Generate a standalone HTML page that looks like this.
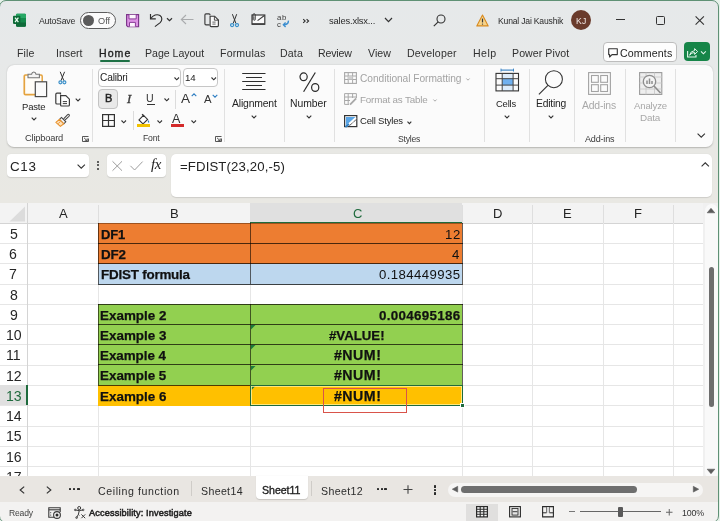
<!DOCTYPE html>
<html><head><meta charset="utf-8"><style>
html,body{margin:0;padding:0;}
body{width:720px;height:521px;overflow:hidden;position:relative;background:#e8e9e9;font-family:"Liberation Sans",sans-serif;}
.t{position:absolute;white-space:nowrap;line-height:1.117;will-change:transform;}
.r{position:absolute;box-sizing:border-box;}
svg.r{overflow:visible;}
</style></head><body>
<div class="r" style="left:0px;top:0px;width:720px;height:203px;background:linear-gradient(180deg,#e6e9ea 0px,#e7e9e9 60px,#e8e8e4 150px,#e9e8e3 203px);"></div>
<svg class="r" style="left:12px;top:13px;" width="15" height="14" viewBox="0 0 15 14"><rect x="4" y="0.8" width="10" height="12.9" rx="1.1" fill="#148a4c"/>
<path d="M4 5 V1.9 Q4 0.8 5.1 0.8 H12.9 Q14 0.8 14 1.9 V5 Z" fill="#27a865"/>
<path d="M4 9.4 H14 V12.6 Q14 13.7 12.9 13.7 H5.1 Q4 13.7 4 12.6 Z" fill="#0f6b3a"/>
<rect x="1" y="2.8" width="7.4" height="8.1" rx="0.8" fill="#0d6a37"/>
<path d="M3 4.6 L6.4 9.1 M6.4 4.6 L3 9.1" stroke="#e8fff0" stroke-width="1.25"/></svg>
<div class="t" style="left:38.98px;top:16px;line-height:10px;font-size:8.7px;font-weight:400;color:#2b2b2b;letter-spacing:-0.189px;">AutoSave</div>
<div class="r" style="left:80px;top:12px;width:36px;height:16.5px;border:1.3px solid #5c5c5c;border-radius:9px;background:#fbfbfb;"></div>
<div class="r" style="left:83px;top:15.1px;width:11px;height:11px;border-radius:50%;background:#5b5b5b;"></div>
<div class="t" style="left:98.31px;top:16px;line-height:10px;font-size:9.2px;font-weight:400;color:#555;letter-spacing:0.002px;">Off</div>
<svg class="r" style="left:126px;top:13.6px;" width="13.4" height="13.6" viewBox="0 0 13.4 13.6"><path d="M0.6 0.6 H12.6 V12.8 H1.9 L0.6 11.5 Z" fill="#dc92e4" stroke="#7b3589" stroke-width="1.15"/>
<path d="M3 0.8 V4.9 H10.2 V0.8" fill="#fdf6fd" stroke="#8a3d98" stroke-width="1"/>
<path d="M3.5 12.6 V8.4 H9.4 V12.6" fill="#fdf6fd" stroke="#8a3d98" stroke-width="1"/></svg>
<svg class="r" style="left:149px;top:13px;" width="14" height="14" viewBox="0 0 14 14"><path d="M1.5 1 V5.8 H6.8" fill="none" stroke="#2e2e2e" stroke-width="1.15"/>
<path d="M1.8 5.5 C4 2.2 8 0.6 11 2.6 C13.6 4.4 13.2 7.6 11.2 9.6 L5.9 13.6" fill="none" stroke="#2e2e2e" stroke-width="1.15"/></svg>
<svg class="r" style="left:166px;top:17px;" width="7" height="5" viewBox="0 0 7 5"><path d="M1 1.2 L3.5 3.6 L6 1.2" fill="none" stroke="#333" stroke-width="1.2"/></svg>
<svg class="r" style="left:180px;top:14px;" width="14" height="11" viewBox="0 0 14 11"><path d="M13.5 5.5 H1.5 M6 1 L1.3 5.5 L6 10" fill="none" stroke="#a9abad" stroke-width="1.1"/></svg>
<svg class="r" style="left:203.5px;top:13px;" width="16" height="15" viewBox="0 0 16 15"><path d="M6 2.3 V1.8 Q6 0.8 5 0.8 H2 Q0.9 0.8 0.9 1.9 V10.8 Q0.9 11.8 2 11.8 H5.6" fill="none" stroke="#3b3b3b" stroke-width="1.15"/>
<path d="M6.1 3.2 H10.6 L14.4 7 V12.6 Q14.4 13.6 13.4 13.6 H7.1 Q6.1 13.6 6.1 12.6 Z" fill="#fafafa" stroke="#3b3b3b" stroke-width="1.15"/>
<path d="M10.4 3.4 V7.2 H14.2" fill="none" stroke="#3b3b3b" stroke-width="0.9"/>
<path d="M8.4 9.1 H11.6 M8.4 11.1 H11.6" stroke="#555" stroke-width="0.9"/></svg>
<svg class="r" style="left:229px;top:13px;" width="11" height="15" viewBox="0 0 11 15"><path d="M3.4 1.2 L6.9 10.4 M7.7 1.2 L4.2 10.4" stroke="#333" stroke-width="1"/>
<circle cx="3.1" cy="12.1" r="1.55" fill="#e8f3fa" stroke="#3a8fc8" stroke-width="1.2"/>
<circle cx="8" cy="12.1" r="1.55" fill="#e8f3fa" stroke="#3a8fc8" stroke-width="1.2"/></svg>
<svg class="r" style="left:251px;top:13px;" width="15" height="13" viewBox="0 0 15 13"><rect x="1" y="2" width="12.8" height="9.2" fill="#fafafa" stroke="#3b3b3b" stroke-width="1.2"/>
<path d="M1 11 H13.8" stroke="#3b3b3b" stroke-width="1.5"/>
<path d="M6.6 7.6 L13.4 2.5" stroke="#3b3b3b" stroke-width="1.1"/>
<path d="M1.9 7.4 V2 Q1.9 0.7 3.1 0.7 Q4.3 0.7 4.3 2 V6.4 Q4.3 7.3 3.5 7.3 Q2.9 7.3 2.9 6.4 V3.4" fill="none" stroke="#3b3b3b" stroke-width="0.9"/></svg>
<div class="t" style="left:276.8px;top:13.9px;font-size:7.8px;line-height:7px;color:#3a3a3a;letter-spacing:0.6px">ab<br>c</div>
<svg class="r" style="left:281px;top:20px;" width="9" height="8" viewBox="0 0 9 8"><path d="M7.4 0.6 Q7.6 4.7 2.6 4.7" fill="none" stroke="#3b8ed0" stroke-width="1.5"/><path d="M4.6 2.5 L2.4 4.7 L4.6 6.9" fill="none" stroke="#3b8ed0" stroke-width="1.4"/></svg>
<svg class="r" style="left:302px;top:18px;" width="8" height="6" viewBox="0 0 8 6"><path d="M1.2 1.2 L3.2 3 L1.2 4.8 M4.6 1.2 L6.6 3 L4.6 4.8" fill="none" stroke="#2a2a2a" stroke-width="1.05"/></svg>
<div class="t" style="left:329.49px;top:15px;line-height:11px;font-size:9.4px;font-weight:400;color:#2b2b2b;letter-spacing:-0.184px;">sales.xlsx...</div>
<svg class="r" style="left:384px;top:17px;" width="9" height="6" viewBox="0 0 9 6"><path d="M1 1 L4.5 4.6 L8 1" fill="none" stroke="#333" stroke-width="1.2"/></svg>
<svg class="r" style="left:433px;top:14px;" width="13" height="13" viewBox="0 0 13 13"><circle cx="8" cy="5" r="4" fill="none" stroke="#333" stroke-width="1.1"/><path d="M5.2 7.8 L0.8 12.2" stroke="#333" stroke-width="1.2"/></svg>
<svg class="r" style="left:475.5px;top:13.5px;" width="13" height="13" viewBox="0 0 13 13"><path d="M6.5 1 L12.2 11.9 H0.8 Z" fill="#f6d38a" stroke="#d88a1f" stroke-width="1.1" stroke-linejoin="round"/><path d="M6.5 4.6 V8.4" stroke="#3a3a3a" stroke-width="1.2"/><circle cx="6.5" cy="10.1" r="0.7" fill="#3a3a3a"/></svg>
<div class="t" style="left:497.69px;top:16px;line-height:10px;font-size:8.6px;font-weight:400;color:#2b2b2b;letter-spacing:-0.192px;">Kunal Jai Kaushik</div>
<div class="r" style="left:571px;top:10px;width:20px;height:20px;border-radius:50%;background:#6a3b2c;"></div>
<div class="t" style="left:575.79px;top:16px;line-height:10px;font-size:8.6px;font-weight:400;color:#f3e9e6;letter-spacing:0.308px;">KJ</div>
<div class="r" style="left:616px;top:19.3px;width:9px;height:1.2px;background:#333;"></div>
<div class="r" style="left:656px;top:16px;width:8.5px;height:8.5px;border:1.2px solid #333;border-radius:1.5px;"></div>
<svg class="r" style="left:695px;top:16px;" width="9.5" height="9" viewBox="0 0 9.5 9"><path d="M0.6 0.4 L8.9 8.6 M8.9 0.4 L0.6 8.6" stroke="#333" stroke-width="1.1"/></svg>
<div class="t" style="left:17.13px;top:47px;line-height:12px;font-size:10.6px;font-weight:400;color:#303030;letter-spacing:0.087px;">File</div>
<div class="t" style="left:55.52px;top:47px;line-height:12px;font-size:10.6px;font-weight:400;color:#303030;letter-spacing:0.009px;">Insert</div>
<div class="t" style="left:144.63px;top:47px;line-height:12px;font-size:10.6px;font-weight:400;color:#303030;letter-spacing:-0.033px;">Page Layout</div>
<div class="t" style="left:220.13px;top:47px;line-height:12px;font-size:10.6px;font-weight:400;color:#303030;letter-spacing:0.154px;">Formulas</div>
<div class="t" style="left:280.13px;top:47px;line-height:12px;font-size:10.6px;font-weight:400;color:#303030;letter-spacing:0.160px;">Data</div>
<div class="t" style="left:318.13px;top:47px;line-height:12px;font-size:10.6px;font-weight:400;color:#303030;letter-spacing:-0.182px;">Review</div>
<div class="t" style="left:367.95px;top:47px;line-height:12px;font-size:10.6px;font-weight:400;color:#303030;letter-spacing:0.015px;">View</div>
<div class="t" style="left:406.63px;top:47px;line-height:12px;font-size:10.6px;font-weight:400;color:#303030;letter-spacing:0.154px;">Developer</div>
<div class="t" style="left:472.88px;top:47px;line-height:12px;font-size:10.6px;font-weight:400;color:#303030;letter-spacing:0.421px;">Help</div>
<div class="t" style="left:511.63px;top:47px;line-height:12px;font-size:10.6px;font-weight:400;color:#303030;letter-spacing:0.064px;">Power Pivot</div>
<div class="t" style="left:98.63px;top:47px;line-height:12px;font-size:10.6px;font-weight:400;color:#1f1f1f;letter-spacing:1.022px;-webkit-text-stroke:0.35px #1f1f1f;">Home</div>
<div class="r" style="left:99.5px;top:60.3px;width:30.5px;height:2.2px;background:#1e7145;border-radius:1px;"></div>
<div class="r" style="left:603.2px;top:42px;width:73.5px;height:20px;border:1px solid #bdbdbd;border-radius:4px;background:#fdfdfd;"></div>
<svg class="r" style="left:608px;top:47.8px;" width="10" height="10" viewBox="0 0 10 10"><path d="M0.7 0.7 H9.3 V6.6 H4 L1.6 9 V6.6 H0.7 Z" fill="none" stroke="#333" stroke-width="1.1" stroke-linejoin="round"/></svg>
<div class="t" style="left:620.16px;top:47px;line-height:12px;font-size:10.6px;font-weight:400;color:#242424;letter-spacing:0.139px;">Comments</div>
<div class="r" style="left:684px;top:42.3px;width:25.6px;height:19.2px;background:#168548;border-radius:4px;"></div>
<svg class="r" style="left:686px;top:46.5px;" width="22" height="12" viewBox="0 0 22 12"><path d="M1.6 4 V10 H10 V8" fill="none" stroke="#e3f6ea" stroke-width="1.1"/>
<path d="M3.6 8.2 Q4.4 4 8.6 3.6 V1.6 L11.6 4.5 L8.6 7.4 V5.5 Q5.6 5.4 3.6 8.2 Z" fill="none" stroke="#e3f6ea" stroke-width="1" stroke-linejoin="round"/>
<path d="M15 4.4 L17.4 6.8 L19.8 4.4" fill="none" stroke="#e3f6ea" stroke-width="1.1"/></svg>
<div class="r" style="left:7px;top:65px;width:706px;height:81.5px;background:#fbfbfb;border-radius:7px;box-shadow:0 0.6px 1.5px rgba(0,0,0,0.22);"></div>
<div class="r" style="left:91.5px;top:69px;width:1px;height:72.5px;background:#e1e1e1;"></div>
<div class="r" style="left:224.3px;top:69px;width:1px;height:72.5px;background:#e1e1e1;"></div>
<div class="r" style="left:283.5px;top:69px;width:1px;height:72.5px;background:#e1e1e1;"></div>
<div class="r" style="left:333.9px;top:69px;width:1px;height:72.5px;background:#e1e1e1;"></div>
<div class="r" style="left:484.2px;top:69px;width:1px;height:72.5px;background:#e1e1e1;"></div>
<div class="r" style="left:529px;top:69px;width:1px;height:72.5px;background:#e1e1e1;"></div>
<div class="r" style="left:573.5px;top:69px;width:1px;height:72.5px;background:#e1e1e1;"></div>
<div class="r" style="left:625.2px;top:69px;width:1px;height:72.5px;background:#e1e1e1;"></div>
<div class="r" style="left:675.2px;top:69px;width:1px;height:72.5px;background:#e1e1e1;"></div>
<div class="t" style="left:24.83px;top:133px;line-height:10px;font-size:9.3px;font-weight:400;color:#3a3a3a;letter-spacing:-0.192px;">Clipboard</div>
<div class="t" style="left:142.99px;top:133px;line-height:10px;font-size:8.6px;font-weight:400;color:#3a3a3a;letter-spacing:-0.180px;">Font</div>
<div class="t" style="left:397.61px;top:134px;line-height:10px;font-size:8.6px;font-weight:400;color:#3a3a3a;letter-spacing:-0.224px;">Styles</div>
<div class="t" style="left:584.58px;top:134px;line-height:10px;font-size:9.0px;font-weight:400;color:#3a3a3a;letter-spacing:-0.170px;">Add-ins</div>
<svg class="r" style="left:82px;top:136px;" width="7" height="6" viewBox="0 0 7 6"><path d="M0.5 5.5 V0.5 H6.5 M0.5 5.5 H6.5 V2.5 M2 1.8 L5.2 4.8 M5.2 2.4 V4.8 H2.8" fill="none" stroke="#444" stroke-width="0.9"/></svg>
<svg class="r" style="left:215.2px;top:136px;" width="7" height="6" viewBox="0 0 7 6"><path d="M0.5 5.5 V0.5 H6.5 M0.5 5.5 H6.5 V2.5 M2 1.8 L5.2 4.8 M5.2 2.4 V4.8 H2.8" fill="none" stroke="#444" stroke-width="0.9"/></svg>
<svg class="r" style="left:22px;top:71px;" width="27" height="27" viewBox="0 0 27 27"><path d="M5.8 4 H3.5 Q2.3 4 2.3 5.2 V22.5 Q2.3 23.7 3.5 23.7 H13.3 V10.8 H20.2 V5.2 Q20.2 4 19 4 H17.6 Z" fill="#fffdf8" stroke="none"/>
<path d="M5.8 4 H3.5 Q2.3 4 2.3 5.2 V22.5 Q2.3 23.7 3.5 23.7 H13.3" fill="none" stroke="#e5a33e" stroke-width="1.7"/>
<path d="M17.6 4 H19 Q20.2 4 20.2 5.2 V10.8" fill="none" stroke="#e5a33e" stroke-width="1.5"/>
<path d="M6 6.8 V3.2 H9.6 Q10 1 11.8 1 Q13.6 1 14 3.2 H17.4 V6.8 Z" fill="#f4f4f4" stroke="#767676" stroke-width="1.1"/>
<rect x="13.3" y="10.8" width="11.3" height="14.8" fill="#fafafa" stroke="#4a4a4a" stroke-width="1.2"/></svg>
<div class="t" style="left:21.72px;top:101px;line-height:11px;font-size:9.5px;font-weight:400;color:#242424;letter-spacing:-0.198px;">Paste</div>
<svg class="r" style="left:30.5px;top:116.5px;" width="6" height="4" viewBox="0 0 6 4"><path d="M0.7 0.7 L3 3 L5.3 0.7" fill="none" stroke="#333" stroke-width="1.1"/></svg>
<svg class="r" style="left:57px;top:71px;" width="11" height="14" viewBox="0 0 11 14"><path d="M3.2 0.8 L6.8 9.6 M7.6 0.8 L4 9.6" stroke="#333" stroke-width="1"/>
<circle cx="3.4" cy="11.3" r="1.5" fill="#e8f3fa" stroke="#3a8fc8" stroke-width="1.15"/>
<circle cx="7.4" cy="11.3" r="1.5" fill="#e8f3fa" stroke="#3a8fc8" stroke-width="1.15"/></svg>
<svg class="r" style="left:54.5px;top:92px;" width="16" height="15" viewBox="0 0 16 15"><path d="M5.5 2.5 V1.2 H2 Q0.8 1.2 0.8 2.4 V11 Q0.8 12 2 12 H5" fill="none" stroke="#3b3b3b" stroke-width="1.2"/>
<path d="M5.6 3.6 H10.8 L14.4 7.2 V13 Q14.4 14 13.4 14 H6.6 Q5.6 14 5.6 13 Z" fill="#fff" stroke="#3b3b3b" stroke-width="1.2"/>
<path d="M7.8 9.6 H12 M7.8 11.6 H12" stroke="#3b3b3b" stroke-width="1"/></svg>
<svg class="r" style="left:75px;top:97.5px;" width="6" height="4" viewBox="0 0 6 4"><path d="M0.7 0.7 L3 3 L5.3 0.7" fill="none" stroke="#333" stroke-width="1.1"/></svg>
<svg class="r" style="left:55px;top:113px;" width="15" height="14" viewBox="0 0 15 14"><path d="M8.6 5.8 L12.4 1.8 Q13.4 0.9 14.1 1.6 Q14.8 2.4 13.9 3.3 L9.9 7.1" fill="#fff" stroke="#444" stroke-width="1.05"/>
<path d="M6.4 4.4 L10.8 8.8 L8.8 10.8 L4.4 6.4 Z" fill="#fff" stroke="#444" stroke-width="1.05"/>
<path d="M4.4 6.4 L0.9 9.3 L5.4 13.4 L8.8 10.8 Z" fill="#fde1bd" stroke="#e8922c" stroke-width="1.1" stroke-linejoin="round"/>
<path d="M3.2 10.6 L5.6 8.4" stroke="#e8922c" stroke-width="0.9"/></svg>
<div class="r" style="left:98.2px;top:68.4px;width:83px;height:19px;border:1px solid #c6c6c6;border-radius:4px;background:#fff;"></div>
<div class="t" style="left:99.68px;top:72px;line-height:11px;font-size:10.2px;font-weight:400;color:#242424;letter-spacing:-0.184px;">Calibri</div>
<svg class="r" style="left:174.2px;top:76.5px;" width="5.5" height="3.5" viewBox="0 0 5.5 3.5"><path d="M0.5 0.5 L2.75 2.8 L5 0.5" fill="none" stroke="#333" stroke-width="1.1"/></svg>
<div class="r" style="left:183.2px;top:68.4px;width:34.4px;height:19px;border:1px solid #c6c6c6;border-radius:4px;background:#fff;"></div>
<div class="t" style="left:184.96px;top:72px;line-height:11px;font-size:9.7px;font-weight:400;color:#242424;letter-spacing:-0.166px;">14</div>
<svg class="r" style="left:211px;top:76.5px;" width="5.5" height="3.5" viewBox="0 0 5.5 3.5"><path d="M0.5 0.5 L2.75 2.8 L5 0.5" fill="none" stroke="#333" stroke-width="1.1"/></svg>
<div class="r" style="left:98.4px;top:89.4px;width:19.5px;height:19.2px;border:1px solid #c3c3c3;border-radius:4px;background:#e9e9e9;"></div>
<div class="t" style="left:104.60px;top:92px;line-height:12px;font-size:11px;font-weight:400;color:#222;letter-spacing:0.000px;-webkit-text-stroke:0.45px #222;">B</div>
<div class="t" style="left:126.94px;top:92px;line-height:14px;font-size:12.6px;font-weight:400;color:#3a3a3a;letter-spacing:0.000px;font-family:'Liberation Serif',serif;font-style:italic;-webkit-text-stroke:0.35px #3a3a3a;">I</div>
<div class="t" style="left:146.38px;top:92px;line-height:12px;font-size:10.6px;font-weight:400;color:#333;letter-spacing:0.000px;">U</div>
<div class="r" style="left:147px;top:104.2px;width:7.6px;height:1px;background:#333;"></div>
<svg class="r" style="left:164.2px;top:98.3px;" width="5.5" height="3.5" viewBox="0 0 5.5 3.5"><path d="M0.5 0.5 L2.75 2.8 L5 0.5" fill="none" stroke="#333" stroke-width="1.1"/></svg>
<div class="r" style="left:175.3px;top:90px;width:1px;height:18.5px;background:#dcdcdc;"></div>
<div class="t" style="left:180.97px;top:91px;line-height:15px;font-size:13.6px;font-weight:400;color:#333;letter-spacing:0.000px;">A</div>
<svg class="r" style="left:190.5px;top:92.5px;" width="6" height="4" viewBox="0 0 6 4"><path d="M0.7 3.2 L3 0.9 L5.3 3.2" fill="none" stroke="#2f7ec2" stroke-width="1.1"/></svg>
<div class="t" style="left:203.68px;top:93px;line-height:12px;font-size:11.3px;font-weight:400;color:#333;letter-spacing:0.000px;">A</div>
<svg class="r" style="left:211.8px;top:93.5px;" width="6" height="4" viewBox="0 0 6 4"><path d="M0.7 0.8 L3 3.1 L5.3 0.8" fill="none" stroke="#2f7ec2" stroke-width="1.1"/></svg>
<svg class="r" style="left:101.5px;top:114px;" width="13" height="13" viewBox="0 0 13 13"><rect x="0.6" y="0.6" width="11.8" height="11.8" fill="none" stroke="#333" stroke-width="1.2"/><path d="M6.5 0.6 V12.4 M0.6 6.5 H12.4" stroke="#333" stroke-width="1.2"/></svg>
<svg class="r" style="left:121.2px;top:119.5px;" width="5.5" height="3.5" viewBox="0 0 5.5 3.5"><path d="M0.5 0.5 L2.75 2.8 L5 0.5" fill="none" stroke="#333" stroke-width="1.1"/></svg>
<div class="r" style="left:132.6px;top:111px;width:1px;height:19.4px;background:#dcdcdc;"></div>
<svg class="r" style="left:137px;top:113px;" width="14" height="14" viewBox="0 0 14 14"><path d="M2 6.8 L6.5 2.3 L10.6 6.4 L6.8 10.2 Q6 11 5.2 10.2 L2 7 Z" fill="#fff" stroke="#333" stroke-width="1.1"/>
<path d="M5 1.2 L6.8 3" stroke="#333" stroke-width="1.1"/>
<path d="M11.3 7 Q12.6 8.6 12.2 9.4 Q11.6 10 11 9.2 Q10.6 8.4 11.3 7 Z" fill="#2f7ec2"/></svg>
<div class="r" style="left:137.3px;top:124.2px;width:13.2px;height:2.8px;background:#f2c200;"></div>
<svg class="r" style="left:156.7px;top:119.5px;" width="5.5" height="3.5" viewBox="0 0 5.5 3.5"><path d="M0.5 0.5 L2.75 2.8 L5 0.5" fill="none" stroke="#333" stroke-width="1.1"/></svg>
<div class="t" style="left:172.18px;top:112px;line-height:14px;font-size:12.6px;font-weight:400;color:#333;letter-spacing:0.000px;">A</div>
<div class="r" style="left:171px;top:124.2px;width:12.8px;height:2.8px;background:#d42a2a;"></div>
<svg class="r" style="left:190.5px;top:119.5px;" width="5.5" height="3.5" viewBox="0 0 5.5 3.5"><path d="M0.5 0.5 L2.75 2.8 L5 0.5" fill="none" stroke="#333" stroke-width="1.1"/></svg>
<svg class="r" style="left:242px;top:72px;" width="24" height="19" viewBox="0 0 24 19"><path d="M0.2 1.5 H23.5 M4 5.5 H20 M0.2 9.5 H23.5 M4 13.5 H20 M0.2 17.5 H23.5" stroke="#2e2e2e" stroke-width="1.15"/></svg>
<div class="t" style="left:231.58px;top:98px;line-height:11px;font-size:10.4px;font-weight:400;color:#242424;letter-spacing:-0.169px;">Alignment</div>
<svg class="r" style="left:251px;top:114.5px;" width="6" height="4" viewBox="0 0 6 4"><path d="M0.7 0.7 L3 3 L5.3 0.7" fill="none" stroke="#333" stroke-width="1.1"/></svg>
<svg class="r" style="left:297.5px;top:71.5px;" width="23" height="21" viewBox="0 0 23 21"><ellipse cx="5.6" cy="4.8" rx="3.6" ry="3.9" fill="none" stroke="#2a2a2a" stroke-width="1.2"/><ellipse cx="17.2" cy="15.5" rx="3.6" ry="3.9" fill="none" stroke="#2a2a2a" stroke-width="1.2"/><path d="M17.3 0.5 L5.6 19.8" stroke="#2a2a2a" stroke-width="1.2"/></svg>
<div class="t" style="left:290.15px;top:98px;line-height:11px;font-size:10.4px;font-weight:400;color:#242424;letter-spacing:-0.073px;">Number</div>
<svg class="r" style="left:306px;top:114.5px;" width="6" height="4" viewBox="0 0 6 4"><path d="M0.7 0.7 L3 3 L5.3 0.7" fill="none" stroke="#333" stroke-width="1.1"/></svg>
<svg class="r" style="left:344px;top:71.8px;" width="13" height="12" viewBox="0 0 13 12"><rect x="0.6" y="0.6" width="11.8" height="10.8" fill="none" stroke="#a8a8a8" stroke-width="1.1"/><path d="M0.6 4 H12.4 M0.6 7.5 H12.4 M4.2 0.6 V11.4 M8.6 0.6 V11.4" stroke="#a8a8a8" stroke-width="1"/><rect x="4.2" y="4" width="4.4" height="3.5" fill="#d0d0d0"/></svg>
<div class="t" style="left:360.28px;top:73px;line-height:11px;font-size:10.2px;font-weight:400;color:#a3a3a3;letter-spacing:-0.047px;">Conditional Formatting</div>
<svg class="r" style="left:466px;top:78px;" width="4" height="3" viewBox="0 0 4 3"><path d="M0.4 0.5 L2 2.2 L3.6 0.5" fill="none" stroke="#a3a3a3" stroke-width="0.9"/></svg>
<svg class="r" style="left:344px;top:93.2px;" width="13" height="12" viewBox="0 0 13 12"><path d="M0.6 0.6 H12.4 V5 M0.6 0.6 V11.4 H5 M0.6 4 H12.4 M0.6 7.5 H6 M4.2 0.6 V11.4 M8.6 0.6 V5" fill="none" stroke="#a8a8a8" stroke-width="1"/><path d="M6 11.6 L12.2 5.4" stroke="#a8a8a8" stroke-width="1.8"/></svg>
<div class="t" style="left:360.00px;top:94px;line-height:11px;font-size:9.8px;font-weight:400;color:#a3a3a3;letter-spacing:-0.172px;">Format as Table</div>
<svg class="r" style="left:432.7px;top:99.3px;" width="4" height="3" viewBox="0 0 4 3"><path d="M0.4 0.5 L2 2.2 L3.6 0.5" fill="none" stroke="#a3a3a3" stroke-width="0.9"/></svg>
<svg class="r" style="left:344px;top:115px;" width="13.5" height="12.5" viewBox="0 0 13.5 12.5"><rect x="0.6" y="0.6" width="12.2" height="11" fill="#fff" stroke="#333" stroke-width="1.2"/>
<path d="M1.9 1.9 H11.5 V2.6 L3.4 10.4 H1.9 Z" fill="#5aa5e6"/>
<path d="M2.4 11.2 L12 2.6" stroke="#fff" stroke-width="1.6"/>
<path d="M4.6 11.4 L12.4 4.4" stroke="#333" stroke-width="1" stroke-dasharray="1.2 0.6"/>
<path d="M1.4 12 L5 9" stroke="#2f7ec2" stroke-width="1.8"/></svg>
<div class="t" style="left:360.32px;top:115px;line-height:11px;font-size:9.5px;font-weight:400;color:#242424;letter-spacing:-0.185px;">Cell Styles</div>
<svg class="r" style="left:407px;top:120.6px;" width="5" height="3.5" viewBox="0 0 5 3.5"><path d="M0.5 0.6 L2.4 2.6 L4.3 0.6" fill="none" stroke="#333" stroke-width="1.1"/></svg>
<svg class="r" style="left:494.5px;top:67.5px;" width="25" height="24" viewBox="0 0 25 24"><path d="M6 2.1 H18.5" stroke="#2f7ec2" stroke-width="1.1"/><path d="M6 0.6 V3.6 M18.5 0.6 V3.6" stroke="#2f7ec2" stroke-width="0.9"/>
<rect x="7.2" y="5.4" width="10.9" height="17.5" fill="#dcecfb"/>
<rect x="7.2" y="10.7" width="10.9" height="6.4" fill="#6fb0ef"/>
<rect x="1" y="5.4" width="22.5" height="17.5" fill="none" stroke="#333" stroke-width="1.1"/>
<path d="M1 10.7 H23.5 M1 17.1 H23.5 M7.2 5.4 V22.9 M18.1 5.4 V22.9" stroke="#444" stroke-width="1"/></svg>
<div class="t" style="left:496.42px;top:98px;line-height:11px;font-size:9.4px;font-weight:400;color:#242424;letter-spacing:-0.169px;">Cells</div>
<svg class="r" style="left:503.6px;top:114.5px;" width="6" height="4" viewBox="0 0 6 4"><path d="M0.7 0.7 L3 3 L5.3 0.7" fill="none" stroke="#333" stroke-width="1.1"/></svg>
<svg class="r" style="left:538px;top:69.5px;" width="26" height="25" viewBox="0 0 26 25"><circle cx="15.9" cy="9.2" r="8.5" fill="none" stroke="#333" stroke-width="1.05"/><path d="M9.9 15.3 L0.9 24.3" stroke="#333" stroke-width="1.1"/></svg>
<div class="t" style="left:535.76px;top:98px;line-height:11px;font-size:10.3px;font-weight:400;color:#242424;letter-spacing:-0.214px;">Editing</div>
<svg class="r" style="left:548px;top:114.5px;" width="6" height="4" viewBox="0 0 6 4"><path d="M0.7 0.7 L3 3 L5.3 0.7" fill="none" stroke="#333" stroke-width="1.1"/></svg>
<svg class="r" style="left:588px;top:71.5px;" width="23" height="23" viewBox="0 0 23 23"><rect x="0.6" y="0.6" width="21.8" height="21.8" fill="none" stroke="#a3a3a3" stroke-width="1.1"/><rect x="3.5" y="3.5" width="6.8" height="6.8" fill="none" stroke="#a3a3a3" stroke-width="1.1"/><rect x="12.7" y="3.5" width="6.8" height="6.8" fill="none" stroke="#a3a3a3" stroke-width="1.1"/><rect x="3.5" y="12.7" width="6.8" height="6.8" fill="none" stroke="#a3a3a3" stroke-width="1.1"/><rect x="12.7" y="12.7" width="6.8" height="6.8" fill="none" stroke="#a3a3a3" stroke-width="1.1"/></svg>
<div class="t" style="left:582.48px;top:100px;line-height:11px;font-size:10.4px;font-weight:400;color:#a8a8a8;letter-spacing:-0.186px;">Add-ins</div>
<svg class="r" style="left:639px;top:71.5px;" width="24" height="23" viewBox="0 0 24 23"><rect x="0.6" y="0.6" width="22.2" height="21.8" fill="#eeeeee" stroke="#9a9a9a" stroke-width="1.1"/>
<path d="M0.6 5 H22.8 M0.6 11 H22.8 M0.6 17 H22.8 M7 0.6 V22.4 M15.5 0.6 V22.4" stroke="#c8c8c8" stroke-width="0.9"/>
<circle cx="10.5" cy="9.5" r="6.2" fill="#f4f4f4" stroke="#8d8d8d" stroke-width="1.3"/>
<path d="M15 14 L21.5 21" stroke="#8d8d8d" stroke-width="1.6"/>
<path d="M8 12 V8.5 M10.5 12 V6.5 M13 12 V9" stroke="#8d8d8d" stroke-width="1.5"/></svg>
<div class="t" style="left:634.18px;top:100px;line-height:11px;font-size:9.6px;font-weight:400;color:#a8a8a8;letter-spacing:-0.168px;">Analyze</div>
<div class="t" style="left:639.59px;top:112px;line-height:11px;font-size:9.9px;font-weight:400;color:#a8a8a8;letter-spacing:-0.167px;">Data</div>
<svg class="r" style="left:696.7px;top:133px;" width="8.5" height="5" viewBox="0 0 8.5 5"><path d="M0.6 0.6 L4.25 4.2 L7.9 0.6" fill="none" stroke="#333" stroke-width="1.1"/></svg>
<div class="r" style="left:7px;top:154.4px;width:82px;height:22.6px;background:#fff;border-radius:4px;box-shadow:0 0.5px 1px rgba(0,0,0,0.12);"></div>
<div class="t" style="left:10.12px;top:159px;line-height:15px;font-size:13.4px;font-weight:400;color:#222;letter-spacing:0.644px;">C13</div>
<svg class="r" style="left:77px;top:164px;" width="8.5" height="5" viewBox="0 0 8.5 5"><path d="M0.6 0.6 L4.25 4.2 L7.9 0.6" fill="none" stroke="#333" stroke-width="1.1"/></svg>
<div class="r" style="left:97.3px;top:160.7px;width:1.9px;height:1.9px;background:#333;border-radius:50%;"></div>
<div class="r" style="left:97.3px;top:164.4px;width:1.9px;height:1.9px;background:#333;border-radius:50%;"></div>
<div class="r" style="left:97.3px;top:168.1px;width:1.9px;height:1.9px;background:#333;border-radius:50%;"></div>
<div class="r" style="left:107px;top:154.4px;width:59px;height:22.6px;background:#fff;border-radius:4px;box-shadow:0 0.5px 1px rgba(0,0,0,0.12);"></div>
<svg class="r" style="left:112px;top:160.5px;" width="10.5" height="10" viewBox="0 0 10.5 10"><path d="M0.5 0.3 L10 9.7 M10 0.3 L0.5 9.7" stroke="#9d9d9d" stroke-width="1"/></svg>
<svg class="r" style="left:130.3px;top:160.5px;" width="13" height="9.5" viewBox="0 0 13 9.5"><path d="M0.4 4.8 L4.6 9 L12.6 0.6" fill="none" stroke="#9d9d9d" stroke-width="1"/></svg>
<div class="t" style="left:150.8px;top:156px;font-size:15px;line-height:17px;color:#222;font-family:'Liberation Serif',serif;font-style:italic;letter-spacing:-0.3px">fx</div>
<div class="r" style="left:171px;top:154.4px;width:541px;height:42.8px;background:#fff;border-radius:5px;box-shadow:0 0.5px 1px rgba(0,0,0,0.12);"></div>
<div class="t" style="left:179.86px;top:159px;line-height:15px;font-size:13.2px;font-weight:400;color:#222;letter-spacing:0.126px;">=FDIST(23,20,-5)</div>
<svg class="r" style="left:701px;top:161.5px;" width="8.5" height="5" viewBox="0 0 8.5 5"><path d="M0.6 4.4 L4.25 0.8 L7.9 4.4" fill="none" stroke="#333" stroke-width="1.1"/></svg>
<div class="r" style="left:0px;top:203px;width:703px;height:20.30000000000001px;background:#f3f3f3;"></div>
<div class="r" style="left:0px;top:223.3px;width:703px;height:253.09999999999997px;background:#fff;"></div>
<div class="r" style="left:0px;top:243.24px;width:703px;height:1px;background:#e6e6e6;"></div>
<div class="r" style="left:0px;top:263.48px;width:703px;height:1px;background:#e6e6e6;"></div>
<div class="r" style="left:0px;top:283.71999999999997px;width:703px;height:1px;background:#e6e6e6;"></div>
<div class="r" style="left:0px;top:303.96px;width:703px;height:1px;background:#e6e6e6;"></div>
<div class="r" style="left:0px;top:324.2px;width:703px;height:1px;background:#e6e6e6;"></div>
<div class="r" style="left:0px;top:344.44px;width:703px;height:1px;background:#e6e6e6;"></div>
<div class="r" style="left:0px;top:364.68px;width:703px;height:1px;background:#e6e6e6;"></div>
<div class="r" style="left:0px;top:384.92px;width:703px;height:1px;background:#e6e6e6;"></div>
<div class="r" style="left:0px;top:405.16px;width:703px;height:1px;background:#e6e6e6;"></div>
<div class="r" style="left:0px;top:426.0px;width:703px;height:1px;background:#e6e6e6;"></div>
<div class="r" style="left:0px;top:445.64px;width:703px;height:1px;background:#e6e6e6;"></div>
<div class="r" style="left:0px;top:465.88px;width:703px;height:1px;background:#e6e6e6;"></div>
<div class="r" style="left:0px;top:222.5px;width:703px;height:1.2px;background:#d4d4d4;"></div>
<div class="r" style="left:27px;top:223.3px;width:1px;height:253.09999999999997px;background:#e6e6e6;"></div>
<div class="r" style="left:27px;top:205px;width:1px;height:18.30000000000001px;background:#dedede;"></div>
<div class="r" style="left:98px;top:223.3px;width:1px;height:253.09999999999997px;background:#e6e6e6;"></div>
<div class="r" style="left:98px;top:205px;width:1px;height:18.30000000000001px;background:#dedede;"></div>
<div class="r" style="left:250px;top:223.3px;width:1px;height:253.09999999999997px;background:#e6e6e6;"></div>
<div class="r" style="left:250px;top:205px;width:1px;height:18.30000000000001px;background:#dedede;"></div>
<div class="r" style="left:462px;top:223.3px;width:1px;height:253.09999999999997px;background:#e6e6e6;"></div>
<div class="r" style="left:462px;top:205px;width:1px;height:18.30000000000001px;background:#dedede;"></div>
<div class="r" style="left:532.4px;top:223.3px;width:1px;height:253.09999999999997px;background:#e6e6e6;"></div>
<div class="r" style="left:532.4px;top:205px;width:1px;height:18.30000000000001px;background:#dedede;"></div>
<div class="r" style="left:603px;top:223.3px;width:1px;height:253.09999999999997px;background:#e6e6e6;"></div>
<div class="r" style="left:603px;top:205px;width:1px;height:18.30000000000001px;background:#dedede;"></div>
<div class="r" style="left:673px;top:223.3px;width:1px;height:253.09999999999997px;background:#e6e6e6;"></div>
<div class="r" style="left:673px;top:205px;width:1px;height:18.30000000000001px;background:#dedede;"></div>
<div class="r" style="left:27px;top:203px;width:1px;height:273.4px;background:#d4d4d4;"></div>
<div class="r" style="left:250px;top:203px;width:212px;height:20.30000000000001px;background:#e0e0e0;"></div>
<div class="r" style="left:250px;top:221.8px;width:212px;height:2px;background:#1e6b3d;"></div>
<svg class="r" style="left:9px;top:206px;" width="17" height="16" viewBox="0 0 17 16"><path d="M16 0.5 V15.5 H0.5 Z" fill="#dcdcdc"/></svg>
<div class="t" style="left:58.74px;top:206px;line-height:15px;font-size:13px;font-weight:400;color:#242424;letter-spacing:0.000px;">A</div>
<div class="t" style="left:170.20px;top:206px;line-height:15px;font-size:13px;font-weight:400;color:#242424;letter-spacing:0.000px;">B</div>
<div class="t" style="left:492.84px;top:206px;line-height:15px;font-size:13px;font-weight:400;color:#242424;letter-spacing:0.000px;">D</div>
<div class="t" style="left:563.20px;top:206px;line-height:15px;font-size:13px;font-weight:400;color:#242424;letter-spacing:0.000px;">E</div>
<div class="t" style="left:633.86px;top:206px;line-height:15px;font-size:13px;font-weight:400;color:#242424;letter-spacing:0.000px;">F</div>
<div class="t" style="left:352.75px;top:206px;line-height:15px;font-size:13px;font-weight:400;color:#1f6a3d;letter-spacing:0.000px;">C</div>
<div class="r" style="left:0px;top:385.22px;width:27px;height:20.24px;background:#e0e0e0;"></div>
<div class="r" style="left:26px;top:385.22px;width:2px;height:20.24px;background:#1e6b3d;"></div>
<div class="t" style="left:9.61px;top:226px;line-height:16px;font-size:14.1px;font-weight:400;color:#262626;letter-spacing:0.000px;">5</div>
<div class="t" style="left:9.46px;top:246px;line-height:16px;font-size:14.1px;font-weight:400;color:#262626;letter-spacing:0.000px;">6</div>
<div class="t" style="left:9.46px;top:266px;line-height:16px;font-size:14.1px;font-weight:400;color:#262626;letter-spacing:0.000px;">7</div>
<div class="t" style="left:9.57px;top:287px;line-height:16px;font-size:14.1px;font-weight:400;color:#262626;letter-spacing:0.000px;">8</div>
<div class="t" style="left:9.52px;top:307px;line-height:16px;font-size:14.1px;font-weight:400;color:#262626;letter-spacing:0.000px;">9</div>
<div class="t" style="left:5.98px;top:327px;line-height:16px;font-size:14.1px;font-weight:400;color:#262626;letter-spacing:0.000px;">10</div>
<div class="t" style="left:5.98px;top:347px;line-height:16px;font-size:14.1px;font-weight:400;color:#262626;letter-spacing:0.000px;">11</div>
<div class="t" style="left:5.98px;top:368px;line-height:16px;font-size:14.1px;font-weight:400;color:#262626;letter-spacing:0.000px;">12</div>
<div class="t" style="left:5.98px;top:388px;line-height:16px;font-size:14.1px;font-weight:400;color:#1f6a3d;letter-spacing:0.000px;">13</div>
<div class="t" style="left:5.98px;top:408px;line-height:16px;font-size:14.1px;font-weight:400;color:#262626;letter-spacing:0.000px;">14</div>
<div class="t" style="left:5.98px;top:428px;line-height:16px;font-size:14.1px;font-weight:400;color:#262626;letter-spacing:0.000px;">15</div>
<div class="t" style="left:5.98px;top:449px;line-height:16px;font-size:14.1px;font-weight:400;color:#262626;letter-spacing:0.000px;">16</div>
<div class="t" style="left:5.98px;top:469px;line-height:16px;font-size:14.1px;font-weight:400;color:#262626;letter-spacing:0.000px;">17</div>
<div class="r" style="left:98px;top:223.3px;width:364px;height:20.74px;background:#ed7d31;"></div>
<div class="r" style="left:98px;top:243.54000000000002px;width:364px;height:20.74px;background:#ed7d31;"></div>
<div class="r" style="left:98px;top:263.78000000000003px;width:364px;height:20.74px;background:#bdd7ee;"></div>
<div class="r" style="left:98px;top:304.26px;width:364px;height:20.74px;background:#92d050;"></div>
<div class="r" style="left:98px;top:324.5px;width:364px;height:20.74px;background:#92d050;"></div>
<div class="r" style="left:98px;top:344.74px;width:364px;height:20.74px;background:#92d050;"></div>
<div class="r" style="left:98px;top:364.98px;width:364px;height:20.74px;background:#92d050;"></div>
<div class="r" style="left:98px;top:385.22px;width:364px;height:20.74px;background:#ffc000;"></div>
<div class="r" style="left:98px;top:222.8px;width:365px;height:1px;background:rgba(60,30,10,0.45);"></div>
<div class="r" style="left:98px;top:243.04000000000002px;width:365px;height:1px;background:rgba(10,5,0,0.72);"></div>
<div class="r" style="left:98px;top:263.28000000000003px;width:365px;height:1px;background:rgba(10,5,0,0.72);"></div>
<div class="r" style="left:98px;top:283.52px;width:365px;height:1px;background:rgba(10,5,0,0.72);"></div>
<div class="r" style="left:97.9px;top:223.3px;width:1.3px;height:60.71999999999997px;background:rgba(10,5,0,0.6);"></div>
<div class="r" style="left:249.9px;top:223.3px;width:1.3px;height:60.71999999999997px;background:rgba(10,5,0,0.6);"></div>
<div class="r" style="left:461.9px;top:223.3px;width:1.3px;height:60.71999999999997px;background:rgba(10,5,0,0.6);"></div>
<div class="r" style="left:98px;top:303.76px;width:365px;height:1px;background:rgba(10,5,0,0.72);"></div>
<div class="r" style="left:98px;top:324.0px;width:365px;height:1px;background:rgba(10,5,0,0.72);"></div>
<div class="r" style="left:98px;top:344.24px;width:365px;height:1px;background:rgba(10,5,0,0.72);"></div>
<div class="r" style="left:98px;top:364.48px;width:365px;height:1px;background:rgba(10,5,0,0.72);"></div>
<div class="r" style="left:98px;top:384.72px;width:365px;height:1px;background:rgba(10,5,0,0.72);"></div>
<div class="r" style="left:97.9px;top:304.26px;width:1.3px;height:80.96000000000004px;background:rgba(10,5,0,0.6);"></div>
<div class="r" style="left:249.9px;top:304.26px;width:1.3px;height:101.20000000000005px;background:rgba(10,5,0,0.6);"></div>
<div class="r" style="left:461.9px;top:304.26px;width:1.3px;height:80.96000000000004px;background:rgba(10,5,0,0.6);"></div>
<div class="t" style="left:100.83px;top:227px;line-height:15px;font-size:13.0px;font-weight:700;color:#111;letter-spacing:-0.164px;-webkit-text-stroke:0.25px #111;">DF1</div>
<div class="t" style="left:100.80px;top:247px;line-height:15px;font-size:13.4px;font-weight:700;color:#111;letter-spacing:-0.191px;-webkit-text-stroke:0.25px #111;">DF2</div>
<div class="t" style="left:100.80px;top:267px;line-height:15px;font-size:13.4px;font-weight:700;color:#111;letter-spacing:-0.205px;-webkit-text-stroke:0.25px #111;">FDIST formula</div>
<div class="t" style="left:444.89px;top:227px;line-height:15px;font-size:13.2px;font-weight:400;color:#111;letter-spacing:0.687px;">12</div>
<div class="t" style="left:452.30px;top:247px;line-height:15px;font-size:13.2px;font-weight:400;color:#111;letter-spacing:0.000px;">4</div>
<div class="t" style="left:378.88px;top:267px;line-height:15px;font-size:13.2px;font-weight:400;color:#111;letter-spacing:0.419px;">0.184449935</div>
<div class="t" style="left:100.40px;top:308px;line-height:15px;font-size:13.4px;font-weight:700;color:#111;letter-spacing:0.030px;-webkit-text-stroke:0.25px #111;">Example 2</div>
<div class="t" style="left:100.40px;top:328px;line-height:15px;font-size:13.4px;font-weight:700;color:#111;letter-spacing:0.023px;-webkit-text-stroke:0.25px #111;">Example 3</div>
<div class="t" style="left:100.40px;top:348px;line-height:15px;font-size:13.4px;font-weight:700;color:#111;letter-spacing:-0.028px;-webkit-text-stroke:0.25px #111;">Example 4</div>
<div class="t" style="left:100.40px;top:368px;line-height:15px;font-size:13.4px;font-weight:700;color:#111;letter-spacing:0.009px;-webkit-text-stroke:0.25px #111;">Example 5</div>
<div class="t" style="left:100.40px;top:389px;line-height:15px;font-size:13.4px;font-weight:700;color:#111;letter-spacing:0.023px;-webkit-text-stroke:0.25px #111;">Example 6</div>
<div class="t" style="left:378.97px;top:308px;line-height:15px;font-size:13.4px;font-weight:700;color:#111;letter-spacing:0.297px;-webkit-text-stroke:0.25px #111;">0.004695186</div>
<div class="t" style="left:328.77px;top:328px;line-height:15px;font-size:13.2px;font-weight:700;color:#111;letter-spacing:0.018px;-webkit-text-stroke:0.25px #111;">#VALUE!</div>
<div class="t" style="left:334.06px;top:347px;line-height:16px;font-size:14.2px;font-weight:700;color:#111;letter-spacing:0.483px;-webkit-text-stroke:0.25px #111;">#NUM!</div>
<div class="t" style="left:334.06px;top:367px;line-height:16px;font-size:14.2px;font-weight:700;color:#111;letter-spacing:0.483px;-webkit-text-stroke:0.25px #111;">#NUM!</div>
<div class="t" style="left:334.06px;top:388px;line-height:16px;font-size:14.2px;font-weight:700;color:#111;letter-spacing:0.483px;-webkit-text-stroke:0.25px #111;">#NUM!</div>
<svg class="r" style="left:251px;top:325.1px;" width="5" height="5" viewBox="0 0 5 5"><path d="M0 0 H4.5 L0 4.5 Z" fill="#1e7a3c"/></svg>
<svg class="r" style="left:251px;top:345.34000000000003px;" width="5" height="5" viewBox="0 0 5 5"><path d="M0 0 H4.5 L0 4.5 Z" fill="#1e7a3c"/></svg>
<svg class="r" style="left:251px;top:365.58000000000004px;" width="5" height="5" viewBox="0 0 5 5"><path d="M0 0 H4.5 L0 4.5 Z" fill="#1e7a3c"/></svg>
<svg class="r" style="left:251px;top:385.82000000000005px;" width="5" height="5" viewBox="0 0 5 5"><path d="M0 0 H4.5 L0 4.5 Z" fill="#1e7a3c"/></svg>
<div class="r" style="left:249.5px;top:384.72px;width:213.5px;height:21.439999999999998px;border:1.6px solid #1e6b3d;box-shadow:inset 0 0 0 0.8px #fff3a0;"></div>
<div class="r" style="left:460px;top:403.46000000000004px;width:4.5px;height:4.5px;background:#1e6b3d;border:0.6px solid #fff;"></div>
<div class="r" style="left:323px;top:388.4px;width:83.6px;height:25px;border:1.6px solid #d9534a;"></div>
<div class="r" style="left:703px;top:203px;width:15.5px;height:273.4px;background:#f0f0f0;"></div>
<div class="r" style="left:704.6px;top:203.5px;width:13px;height:275px;background:#f9f9f9;border-radius:7px;"></div>
<svg class="r" style="left:707.3px;top:207.7px;" width="8" height="5" viewBox="0 0 8 5"><path d="M4 0.3 L7.8 4.8 H0.2 Z" fill="#5c5c5c" stroke="#5c5c5c" stroke-width="0.6" stroke-linejoin="round"/></svg>
<div class="r" style="left:708.5px;top:267px;width:5.8px;height:140.3px;background:#6e6e6e;border-radius:3px;"></div>
<svg class="r" style="left:707.3px;top:468.5px;" width="8" height="5" viewBox="0 0 8 5"><path d="M4 4.7 L7.8 0.2 H0.2 Z" fill="#5c5c5c" stroke="#5c5c5c" stroke-width="0.6" stroke-linejoin="round"/></svg>
<div class="r" style="left:0px;top:476.4px;width:718.5px;height:26px;background:#e9e6e2;"></div>
<svg class="r" style="left:19px;top:485.5px;" width="6" height="8" viewBox="0 0 6 8"><path d="M5.2 0.6 L1.2 4 L5.2 7.4" fill="none" stroke="#333" stroke-width="1.2"/></svg>
<svg class="r" style="left:45.8px;top:485.5px;" width="6" height="8" viewBox="0 0 6 8"><path d="M0.8 0.6 L4.8 4 L0.8 7.4" fill="none" stroke="#333" stroke-width="1.2"/></svg>
<div class="r" style="left:69.05px;top:488px;width:2.3px;height:2.3px;background:#2a2a2a;border-radius:0.6px;"></div>
<div class="r" style="left:73.14999999999999px;top:488px;width:2.3px;height:2.3px;background:#2a2a2a;border-radius:0.6px;"></div>
<div class="r" style="left:77.25px;top:488px;width:2.3px;height:2.3px;background:#2a2a2a;border-radius:0.6px;"></div>
<div class="t" style="left:98.21px;top:485px;line-height:12px;font-size:10.6px;font-weight:400;color:#2b2b2b;letter-spacing:0.583px;">Ceiling function</div>
<div class="r" style="left:190.5px;top:481px;width:1px;height:15px;background:#cfccc8;"></div>
<div class="t" style="left:200.77px;top:485px;line-height:12px;font-size:10.6px;font-weight:400;color:#2b2b2b;letter-spacing:0.342px;">Sheet14</div>
<div class="r" style="left:255.5px;top:476.4px;width:52.5px;height:23px;background:#fff;border-radius:0 0 4px 4px;box-shadow:0 0.5px 1px rgba(0,0,0,0.15);"></div>
<div class="t" style="left:262.02px;top:484px;line-height:12px;font-size:10.6px;font-weight:400;color:#1f1f1f;letter-spacing:-0.040px;-webkit-text-stroke:0.35px #1f1f1f;">Sheet11</div>
<div class="r" style="left:310.75px;top:481px;width:1px;height:15px;background:#cfccc8;"></div>
<div class="t" style="left:320.77px;top:485px;line-height:12px;font-size:10.6px;font-weight:400;color:#2b2b2b;letter-spacing:0.379px;">Sheet12</div>
<div class="r" style="left:376.85px;top:488px;width:2.3px;height:2.3px;background:#2a2a2a;border-radius:0.6px;"></div>
<div class="r" style="left:380.55px;top:488px;width:2.3px;height:2.3px;background:#2a2a2a;border-radius:0.6px;"></div>
<div class="r" style="left:384.25px;top:488px;width:2.3px;height:2.3px;background:#2a2a2a;border-radius:0.6px;"></div>
<svg class="r" style="left:403px;top:485px;" width="10" height="9" viewBox="0 0 10 9"><path d="M5 0.3 V8.7 M0.5 4.5 H9.5" stroke="#444" stroke-width="1.1"/></svg>
<div class="r" style="left:433.5px;top:485.4px;width:2.2px;height:2.2px;background:#2a2a2a;border-radius:0.6px;"></div>
<div class="r" style="left:433.5px;top:488.9px;width:2.2px;height:2.2px;background:#2a2a2a;border-radius:0.6px;"></div>
<div class="r" style="left:433.5px;top:492.4px;width:2.2px;height:2.2px;background:#2a2a2a;border-radius:0.6px;"></div>
<div class="r" style="left:448px;top:482.5px;width:255.3px;height:14.5px;background:#f6f5f4;border-radius:7px;"></div>
<svg class="r" style="left:452px;top:486.2px;" width="6" height="6.4" viewBox="0 0 6 6.4"><path d="M0.3 3.2 L5.7 0.3 V6.1 Z" fill="#5c5c5c" stroke="#5c5c5c" stroke-width="0.6" stroke-linejoin="round"/></svg>
<div class="r" style="left:461.3px;top:485.5px;width:175.4px;height:7.5px;background:#6e6e6e;border-radius:4px;"></div>
<svg class="r" style="left:693.3px;top:486.2px;" width="6" height="6.4" viewBox="0 0 6 6.4"><path d="M5.7 3.2 L0.3 0.3 V6.1 Z" fill="#5c5c5c" stroke="#5c5c5c" stroke-width="0.6" stroke-linejoin="round"/></svg>
<div class="r" style="left:0px;top:502.4px;width:718.5px;height:18.6px;background:#f3f2f1;"></div>
<div class="t" style="left:8.99px;top:508px;line-height:10px;font-size:8.6px;font-weight:400;color:#444;letter-spacing:-0.209px;">Ready</div>
<svg class="r" style="left:47.5px;top:506.5px;" width="14" height="12.5" viewBox="0 0 14 12.5"><path d="M6 10.2 H0.8 V0.8 H12.2 V5" fill="none" stroke="#3a3a3a" stroke-width="1.1"/><path d="M0.8 2.8 H12.2" stroke="#3a3a3a" stroke-width="1.1"/>
<path d="M2.7 5.2 V6.2 M2.7 7.6 V8.6" stroke="#3a3a3a" stroke-width="1"/>
<circle cx="9" cy="8" r="3.4" fill="#f3f2f1" stroke="#3a3a3a" stroke-width="1.1"/><circle cx="9" cy="8" r="1.5" fill="#2a2a2a"/></svg>
<svg class="r" style="left:73.5px;top:505.5px;" width="13" height="13" viewBox="0 0 13 13"><circle cx="5.2" cy="2" r="1.5" fill="none" stroke="#3a3a3a" stroke-width="1"/>
<path d="M1.2 3.9 Q5.2 5.4 9.2 3.9" fill="none" stroke="#3a3a3a" stroke-width="1"/>
<circle cx="1.2" cy="3.9" r="0.8" fill="none" stroke="#3a3a3a" stroke-width="0.8"/><circle cx="9.2" cy="3.9" r="0.8" fill="none" stroke="#3a3a3a" stroke-width="0.8"/>
<path d="M5.2 4.8 L4.4 8.4 L2.6 11.6" fill="none" stroke="#3a3a3a" stroke-width="1"/><circle cx="2.6" cy="11.6" r="0.9" fill="none" stroke="#3a3a3a" stroke-width="0.8"/>
<path d="M4.4 8.4 L5.4 9.4" stroke="#3a3a3a" stroke-width="1"/>
<path d="M7.4 8.4 L11.2 12.2 M11.2 8.4 L7.4 12.2" stroke="#3a3a3a" stroke-width="1"/></svg>
<div class="t" style="left:88.73px;top:508px;line-height:10px;font-size:9.2px;font-weight:400;color:#222;letter-spacing:0.129px;-webkit-text-stroke:0.5px #222;">Accessibility: Investigate</div>
<div class="r" style="left:465.5px;top:503.7px;width:32.5px;height:17.3px;background:#e0dfde;"></div>
<svg class="r" style="left:476px;top:506px;" width="12" height="11.5" viewBox="0 0 12 11.5"><rect x="0.6" y="0.6" width="10.8" height="10.3" fill="#fafafa" stroke="#2a2a2a" stroke-width="1.2"/><path d="M4.2 0.6 V10.9 M7.8 0.6 V10.9 M0.6 3.2 H11.4 M0.6 5.75 H11.4 M0.6 8.3 H11.4" stroke="#2a2a2a" stroke-width="1.1"/></svg>
<svg class="r" style="left:509px;top:506px;" width="12" height="11.5" viewBox="0 0 12 11.5"><rect x="0.6" y="0.6" width="10.8" height="10.3" fill="none" stroke="#2a2a2a" stroke-width="1.1"/><rect x="3" y="2.4" width="6" height="6.7" fill="#e6e6e6" stroke="#2a2a2a" stroke-width="0.9"/><path d="M3.6 5.7 H8.4" stroke="#2a2a2a" stroke-width="0.9"/></svg>
<svg class="r" style="left:542px;top:506px;" width="12" height="11.5" viewBox="0 0 12 11.5"><path d="M0.6 0.6 H11.4 V10.9 H0.6 Z" fill="none" stroke="#2a2a2a" stroke-width="1.1"/><path d="M0.6 6.8 H4.6 V0.6 M7.4 0.6 V6.8 H11.4" fill="none" stroke="#2a2a2a" stroke-width="1"/><rect x="4.6" y="1" width="2.8" height="5.8" fill="#d8d8d8"/></svg>
<div class="r" style="left:568.8px;top:511.3px;width:6.2px;height:1px;background:#777;"></div>
<div class="r" style="left:580px;top:511.3px;width:81px;height:1px;background:#666;"></div>
<div class="r" style="left:618.2px;top:507.3px;width:4.5px;height:9.4px;background:#5a5a5a;border-radius:1px;"></div>
<svg class="r" style="left:665.5px;top:508.5px;" width="6.5" height="6.5" viewBox="0 0 6.5 6.5"><path d="M3.25 0 V6.5 M0 3.25 H6.5" stroke="#666" stroke-width="1"/></svg>
<div class="t" style="left:682.02px;top:508px;line-height:10px;font-size:8.9px;font-weight:400;color:#333;letter-spacing:-0.156px;">100%</div>
<div class="r" style="left:-1.5px;top:-0.2px;width:720.5px;height:523.5px;border:1px solid #5f9175;border-radius:7px;box-shadow:0 0 0 30px #e6f2ea;"></div>
</body></html>
